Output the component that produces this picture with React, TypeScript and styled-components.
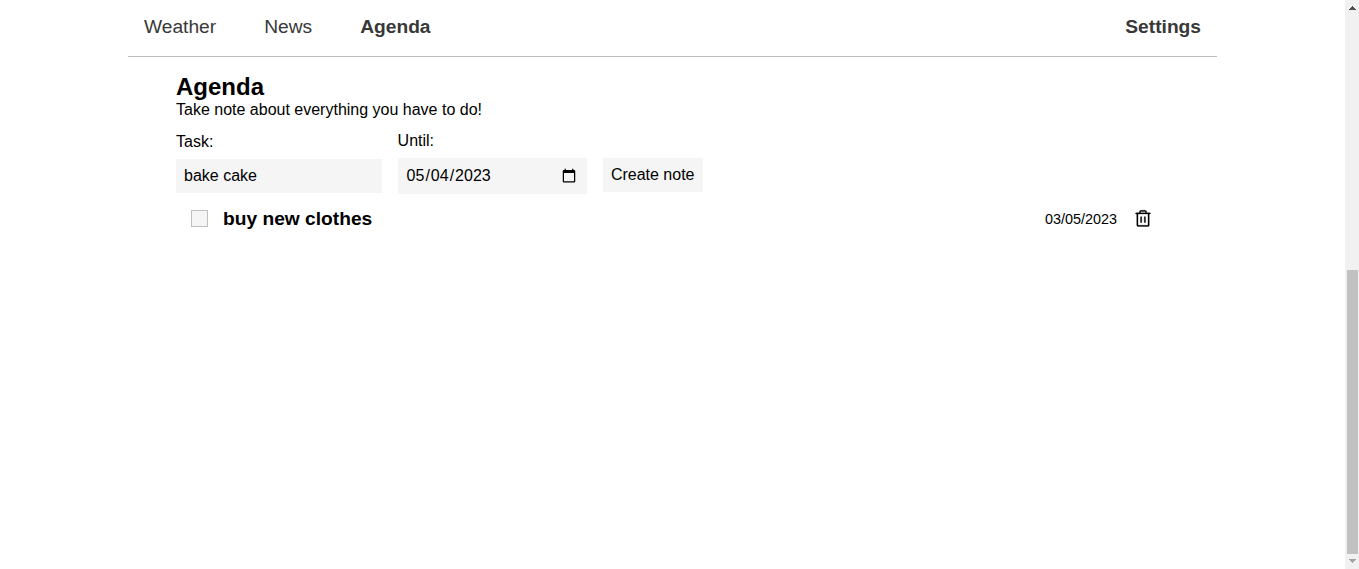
import React, { useState } from 'react';
import styled, { createGlobalStyle } from 'styled-components';
import { PiTrash } from 'react-icons/pi';

const GlobalStyle = createGlobalStyle`
  * { box-sizing: border-box; margin: 0; padding: 0; }
  html, body { height: 100%; overflow: hidden; }
  body {
    background: #fff;
    color: #000;
    font-family: "Liberation Sans", Arial, sans-serif;
    font-size: 16px;
  }
`;

const Window = styled.div`
  display: flex;
  height: 100vh;
`;

const Page = styled.div`
  flex: 1;
  padding: 0 128px;
`;

const Nav = styled.nav`
  display: flex;
  gap: 48px;
  height: 57px;
  padding: 16px 16px 0;
  border-bottom: 1px solid #bfbfbf;
`;

const NavLink = styled.a<{ $bold?: boolean; $end?: boolean }>`
  color: #383838;
  font-size: 19.2px;
  line-height: 22px;
  font-weight: ${(p) => (p.$bold ? 700 : 400)};
  margin-left: ${(p) => (p.$end ? 'auto' : '0')};
  cursor: pointer;
`;

const Main = styled.main`
  padding: 16px 48px 0;
`;

const Title = styled.h1`
  font-size: 24px;
  line-height: 27px;
`;

const Subtitle = styled.p`
  margin-top: 1px;
  line-height: 18px;
`;

const Form = styled.form`
  display: flex;
  align-items: center;
  gap: 16px;
  margin-top: 13px;
`;

const Field = styled.label`
  display: flex;
  flex-direction: column;
  gap: 8px;
  line-height: 18px;
`;

const TextInput = styled.input<{ $width: number; $height: number }>`
  width: ${(p) => p.$width}px;
  height: ${(p) => p.$height}px;
  padding: 8px;
  border: 0;
  outline: 0;
  background: #f5f5f5;
  color: #000;
  font: inherit;
`;

const CreateButton = styled.button`
  align-self: flex-end;
  height: 34px;
  margin-bottom: 2px;
  padding: 8px;
  border: 0;
  background: #f5f5f5;
  color: #000;
  font: inherit;
  line-height: 18px;
`;

const Task = styled.div`
  display: flex;
  align-items: center;
  height: 22px;
  margin-top: 14px;
  padding: 0 16px 0 15px;
`;

const Check = styled.input`
  appearance: none;
  width: 17px;
  height: 17px;
  margin: 0 15px 1px 0;
  border: 1px solid #bfbfbf;
  background: #f5f5f5;
  &:checked { background: #bfbfbf; }
`;

const TaskName = styled.h3`
  flex: 1;
  font-size: 19.2px;
  line-height: 22px;
`;

const DueDate = styled.span`
  font-size: 14.4px;
  margin-right: 16px;
`;

const DeleteButton = styled.button`
  display: flex;
  border: 0;
  background: none;
  color: #000;
`;

const Scrollbar = styled.div`
  display: flex;
  flex-direction: column;
  align-items: center;
  width: 14px;
  padding: 0 1px 0 2px;
  background: #f1f1f1;
`;

const Arrow = styled.svg`
  display: block;
  width: 11px;
  height: 15px;
`;

const Track = styled.div`
  display: flex;
  flex-direction: column;
  justify-content: flex-end;
  flex: 1;
  width: 100%;
`;

const Thumb = styled.div`
  height: 284px;
  background: #c1c1c1;
`;

export default function App() {
  const [task, setTask] = useState('bake cake');
  const [until, setUntil] = useState('2023-05-04');

  return (
    <Window>
      <GlobalStyle />
      <Page>
        <Nav>
          <NavLink>Weather</NavLink>
          <NavLink>News</NavLink>
          <NavLink $bold>Agenda</NavLink>
          <NavLink $bold $end>Settings</NavLink>
        </Nav>
        <Main>
          <Title>Agenda</Title>
          <Subtitle>Take note about everything you have to do!</Subtitle>
          <Form onSubmit={(e) => e.preventDefault()}>
            <Field>
              Task:
              <TextInput $width={205.6} $height={34} value={task} onChange={(e) => setTask(e.target.value)} />
            </Field>
            <Field>
              Until:
              <TextInput type="date" $width={189.3} $height={36} value={until} onChange={(e) => setUntil(e.target.value)} />
            </Field>
            <CreateButton>Create note</CreateButton>
          </Form>
          <Task>
            <Check type="checkbox" />
            <TaskName>buy new clothes</TaskName>
            <DueDate>03/05/2023</DueDate>
            <DeleteButton aria-label="Delete note">
              <PiTrash size={20} strokeWidth={4} />
            </DeleteButton>
          </Task>
        </Main>
      </Page>
      <Scrollbar>
        <Arrow viewBox="0 0 11 15" shapeRendering="crispEdges">
          <path d="M5 6h1v1h1v1h1v1h1v1H2V9h1V8h1V7h1z" fill="#505050" />
        </Arrow>
        <Track>
          <Thumb />
        </Track>
        <Arrow viewBox="0 0 11 15" shapeRendering="crispEdges">
          <path d="M2 5h7v1H8v1H7v1H6v1H5V8H4V7H3V6H2z" fill="#a3a3a3" />
        </Arrow>
      </Scrollbar>
    </Window>
  );
}
